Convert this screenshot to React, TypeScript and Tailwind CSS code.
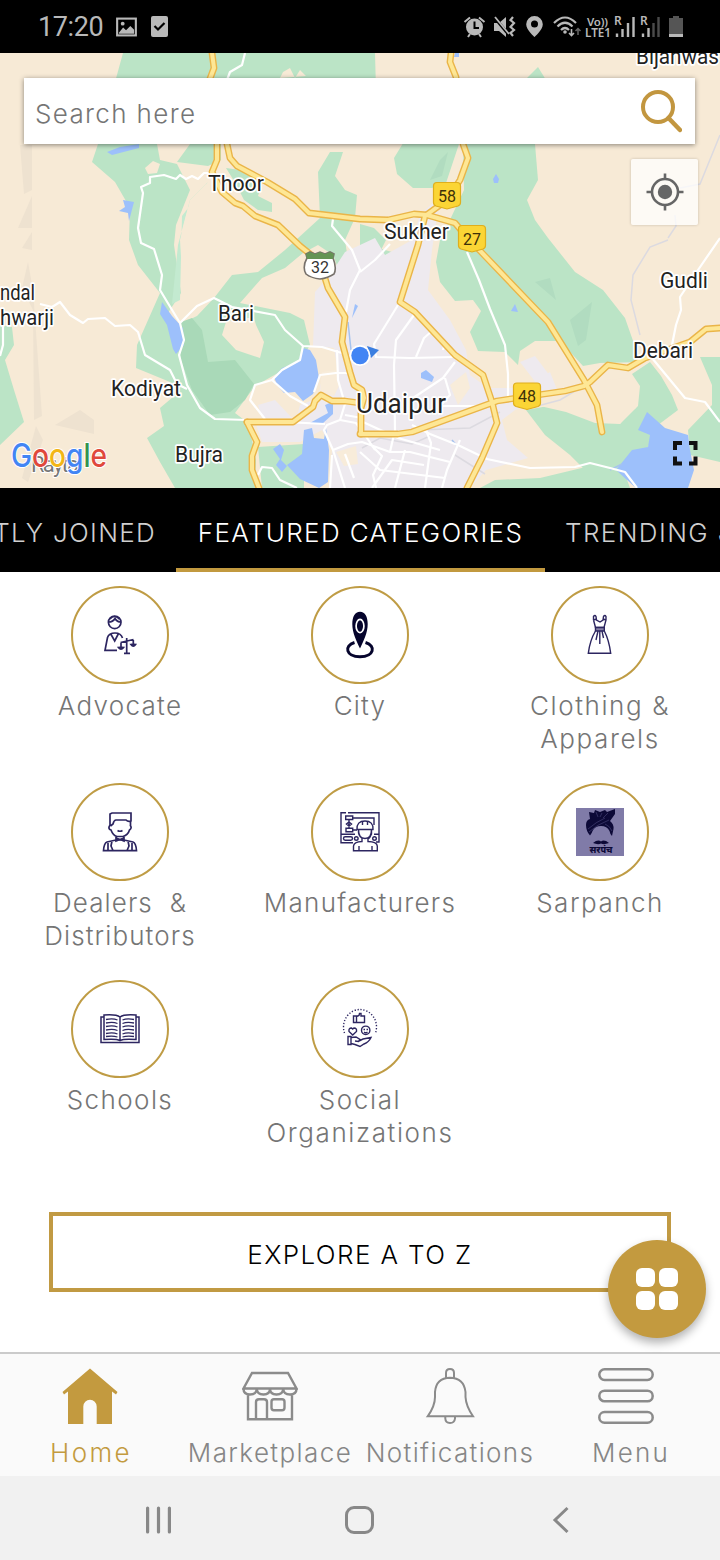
import * as React from "react";

const GOLD = "#c39a3f";
const INK = "#2c2560";

// Main roads, drawn twice: a darker casing and a light core on top
const HIGHWAYS = [
  "M212 53L214 68L208 84L217 144V160L212 172L222 192L235 203L243 206L255 216L278 225L300 246L320 262L328 288L345 317L342 342L350 372L354 385L362 390L364 398L361 408V434",
  "M227 144L230 158L237 166L267 182L295 199L309 213L360 219L388 220L414 214L427 215L455 223L466 236L485 256L548 322L584 380L597 405L602 432",
  "M451 53L450 62L456 77L463 144L468 158L460 180L447 200L425 216L418 245L400 302L415 312L455 355L483 375L492 402L497 423L482 458L467 488",
  "M360 434H398L412 432L497 401L510 399L565 391L584 386L590 382L608 365L628 368L645 358L690 342L706 329L720 328",
  "M247 422H293L313 407L315 401L321 395L332 401H345L360 403",
  "M247 422L257 442L252 456V470L259 488",
];

const STREETS = [
  "M245 53L242 65L230 72L227 80",
  "M212 173L204 173L198 179L192 176L186 179L180 175L176 179L164 175L150 177V183L141 187L143 193L138 228L141 243L154 249L162 275L160 290L166 300L180 323L184 340L179 355L187 385L200 408L215 419L247 420L325 424",
  "M180 323L197 306L214 298L232 307L275 315L285 330L303 346L322 347L345 354",
  "M303 346L300 360L282 370L272 380L255 385L250 400L265 419",
  "M272 380L290 396L308 406",
  "M40 304L52 307L60 302L70 315L83 323L88 319L105 318L115 326L130 325L138 332L145 355L170 370L177 384L187 389",
  "M0 356L3 345V325",
  "M467 252L479 280L490 309L505 345L508 374V400",
  "M720 238L698 270L680 297L681 310L676 325L672 345",
  "M652 358L685 398L705 402L720 422",
  "M412 425L430 434L460 446L487 459L530 468L575 467L590 463L610 468L625 472L637 488",
  "M333 219L332 226L352 250L360 270L350 290L346 312",
  "M360 272L375 260L390 244M398 305L374 344L376 357L410 358L455 357",
  "M414 315L396 340L394 365L395 430L390 452M416 357L424 338L432 331M455 362L443 378L428 388L410 400M445 378L450 395L440 406L482 406M443 350L445 343",
  "M337 350L338 380L345 404L340 420L327 425L324 430L333 450L345 488M345 415L362 418M314 392L320 375L336 373L352 373",
  "M333 450L348 444L362 442L390 452L410 452L450 462M372 446L382 456L373 475L376 488M405 450L395 488M426 430L431 443L425 488M460 440L447 470L442 488M360 452L380 470L445 478M340 420L356 423L365 435L375 450",
  "M258 475L262 467L272 468L280 480L297 488M330 488L332 455",
  "M363 422L398 438L440 450M345 454L354 478M372 488L392 460L424 465",
];

const GREENS = [
  "M123 53H375L376 90L300 144H221V160L208 166L177 162L190 144H157L160 160L177 164L190 190L176 225L174 245L181 293L166 316L178 325L197 316L214 298L232 275L258 272L285 250L320 218L318 172L330 152H343L335 176L345 190L357 195L355 218L345 240L350 274L341 276L333 255L318 245L303 253L285 268L262 278L240 303L290 313L304 320L310 345L300 362L278 373L255 386L235 413L247 422L252 440L256 460L255 488H175L160 462L147 438L164 426L160 408L173 397L170 382L136 368L137 345L160 293L138 265L129 240L130 208L115 182L92 162L98 144Z",
  "M405 140L394 158L397 174L413 188H432L446 183L459 144H535L538 180L527 200L535 220L548 238L575 272L603 290L625 318L638 355L645 362L600 363L583 366L560 341H535L520 351L518 365L505 352L478 351L470 332L481 311L473 300L455 301L440 282L436 262L440 240L448 224L464 190L463 140Z",
  "M525 80L538 67L546 80Z",
  "M526 410L548 406L584 414L620 424L638 406L640 386L632 374L650 362L661 376L672 395L678 410L658 425L648 447L622 470H585L570 455L545 435Z",
  "M480 488L495 480L540 478L590 466L622 466L630 488Z",
  "M700 357H720V462L690 455L688 430L712 405V385Z",
  "M0 325L12 327L14 345L5 360L14 390L24 422L0 445Z",
  "M258 447L304 444V488H262Z",
  "M362 240L378 248L392 252L382 258L372 252Z",
  "M360 224L374 228L386 240L378 256L360 246Z",
  "M226 168L240 170L262 184L258 196L272 203V212L258 210L244 200L236 184Z",
];

const PEACH = [
  "M222 335L226 322L240 318H254L256 325L264 342L260 358L236 350Z",
  "M206 184L190 200L180 240L183 288L215 250L225 200Z",
  "M145 168L153 161L160 164L157 173L148 174Z",
  "M252 392L270 382L288 396L306 404L298 418L268 418L250 408Z",
  "M535 388L580 380L635 380L638 400L620 424L595 423L566 412L540 406Z",
  "M600 418L614 423L636 408L638 388L628 378L606 380Z",
  "M280 78L283 72L290 68L295 78L300 70L306 76Z",
];

const WATERS = [
  "M162 302L172 316L183 328L184 345L176 354L173 349L167 325L160 314Z",
  "M303 348L310 350L316 360L319 378L313 394L303 401L295 392L284 393L277 385L274 377L282 368L298 362Z",
  "M304 430L312 428L314 438L324 439L326 428L329 450L328 482L319 488L300 479L287 465L302 454Z",
  "M273 449L280 444L284 450L281 460L287 466L282 472L276 465L280 459Z",
  "M107 152L120 147L139 144V148L112 155Z",
  "M123 200L134 202L129 221L128 213L119 211L125 207Z",
  "M647 412L665 428L688 435L690 450L694 470L688 488H636L616 470L632 450L648 447L650 435L638 430Z",
  "M325 405L332 402H333V414L322 424L308 424L328 413Z",
  "M421 373L426 370L434 377L432 382L421 378Z",
  "M496 174L499 179L498 183H494L493 179Z",
  "M511 311L515 304L518 312Z",
  "M455 53H459V57H454Z",
  "M355 304L352 318L358 306Z",
];

type Place = { name: string; x: number; y: number; w: number; size?: number };

const PLACES: Place[] = [
  { name: "Bijanwas", x: 636, y: 64, w: 83 },
  { name: "Thoor", x: 208, y: 191, w: 56 },
  { name: "Sukher", x: 384, y: 239, w: 65 },
  { name: "ndal", x: 0, y: 300, w: 35 },
  { name: "hwarji", x: 0, y: 325, w: 54 },
  { name: "Bari", x: 218, y: 321, w: 36 },
  { name: "Kodiyat", x: 111, y: 396, w: 70 },
  { name: "Bujra", x: 175, y: 462, w: 48 },
  { name: "Gudli", x: 660, y: 288, w: 48 },
  { name: "Debari", x: 633, y: 358, w: 60 },
  { name: "Udaipur", x: 356, y: 413, w: 90, size: 27 },
];

function Shield({ x, y, label }: { x: number; y: number; label: string }) {
  return (
    <g transform={`translate(${x} ${y})`}>
      <path d="M-10 -13H10Q13.500 -13 13.500 -9.500V7Q13.500 9.500 11 10.500L0 13.500L-11 10.500Q-13.500 9.500 -13.500 7V-9.500Q-13.500 -13 -10 -13Z" fill="#fbd535" stroke="#dfae1c" strokeWidth="1.200" />
      <text y="6" textAnchor="middle" fontSize="16" fill="#3d3109">{label}</text>
    </g>
  );
}

function CityMap() {
  return (
    <svg viewBox="0 53 720 435" className="block h-[435px] w-[720px] font-normal" fontFamily="Roboto, sans-serif">
      <rect y="53" width="720" height="435" fill="#f7ead6" />
      {GREENS.map((d) => <path key={d} d={d} fill="#bbe4c6" />)}
      <path d="M181 322L192 318L202 330L208 362L235 360L254 384L245 400L230 412L210 415L192 390L181 360Z" fill="#a9d9b8" />
      <path d="M570 320L592 302L586 340L578 346ZM535 282L550 278L556 300ZM430 180L440 160L448 152L442 176Z" fill="#b1dcc0" />
      <path d="M178 245L190 200L208 182L182 216L180 300L172 304Z" fill="#c3ead0" />
      {PEACH.map((d) => <path key={d} d={d} fill="#f7ead6" />)}
      <path d="M20 145H32V190L24 194ZM18 228L32 196V228ZM22 248L32 232V250ZM28 262L33 290L42 416L34 420L33 310L22 288ZM55 425L80 410L94 420V434ZM36 426L43 440L28 482L22 478Z" fill="#eee2d0" />
      <path d="M345 252L375 238L385 255L412 240L420 215L440 196L432 250L428 290L450 320L466 350L470 375L488 388H525L550 372L558 392L515 410L502 420L507 440L528 458L486 470L470 488H330L332 450L322 430L300 442H262L256 424L296 420L300 405L318 398L322 378L338 372L334 348L313 346L315 292L330 275Z" fill="#eeeaef" />
      <path d="M258 405L275 400L292 418H262ZM520 362L535 356L553 380L540 388Z" fill="#eeeaef" />
      <path d="M322 372L336 370L340 384L334 396L320 392ZM450 385L466 372L470 388L458 405ZM336 452L356 446L358 464L344 466Z" fill="#f8ecda" />
      {WATERS.map((d) => <path key={d} d={d} fill="#9dc0fb" />)}
      <path d="M348 322L351 350M452 440L458 447M610 470L622 464" fill="none" stroke="#a6c3ee" strokeWidth="1.500" />
      <path d="M720 135L700 184L680 188M675 215L676 226L668 238M668 240L650 247L633 275L631 300L640 335M530 408L560 400L580 388M420 430L470 428L500 412M455 455L485 474M362 448L380 438L412 444L430 436" fill="none" stroke="#dcdae0" strokeWidth="1.500" />
      {STREETS.map((d) => <path key={d} d={d} fill="none" stroke="#fff" strokeWidth="2.200" strokeLinejoin="round" />)}
      {HIGHWAYS.map((d) => <path key={d} d={d} fill="none" stroke="#eab548" strokeWidth="6.800" strokeLinejoin="round" strokeLinecap="round" />)}
      {HIGHWAYS.map((d) => <path key={d} d={d} fill="none" stroke="#fee795" strokeWidth="4" strokeLinejoin="round" strokeLinecap="round" />)}

      <Shield x={447} y={195.500} label="58" />
      <Shield x={472} y={238.500} label="27" />
      <Shield x={527} y={396} label="48" />
      <path d="M306 254L310 252L315 254L320 252L325 254L330 252L334 254L333 258Q337 268 334 274Q328 278 320 279Q311 278 306 274Q302 267 307 258Z" fill="#fff" stroke="#77716b" strokeWidth="1.600" />
      <path d="M306 254L310 252L315 254L320 252L325 254L330 252L334 254L333 259H307Z" fill="#649454" />
      <text x="320" y="272.500" textAnchor="middle" fontSize="16" fill="#333">32</text>

      {/* Current position with its heading */}
      <path d="M367 346L379 350L371 358Z" fill="#3c7fe0" />
      <circle cx="360" cy="355.500" r="10.500" fill="#fff" />
      <circle cx="360" cy="355.500" r="8.700" fill="#4285f4" />

      {PLACES.map((p) => (
        <text
          key={p.name}
          x={p.x}
          y={p.y}
          fontSize={p.size ?? 22}
          textLength={p.w}
          lengthAdjust="spacingAndGlyphs"
          fill="#222"
          stroke="#fff"
          strokeWidth="3.500"
          strokeLinejoin="round"
          paintOrder="stroke"
        >
          {p.name}
        </text>
      ))}
      <text x="31" y="472" fontSize="22" textLength="48" fill="#777" stroke="#fff" strokeWidth="2" paintOrder="stroke">Rayta</text>
      <text x="11" y="467" fontSize="32" fontWeight="500" textLength="96" lengthAdjust="spacingAndGlyphs" fontFamily="Inter, sans-serif" stroke="#fff" strokeWidth="2" paintOrder="stroke">
        <tspan fill="#4285f4">G</tspan>
        <tspan fill="#e0483c">o</tspan>
        <tspan fill="#f3b617">o</tspan>
        <tspan fill="#4285f4">g</tspan>
        <tspan fill="#34944d">l</tspan>
        <tspan fill="#e0483c">e</tspan>
      </text>
      <path d="M682 443H675V450M689 443H695.500V450M682 463.500H675V456.500M689 463.500H695.500V456.500" fill="none" stroke="#111" strokeWidth="4" />
    </svg>
  );
}

function StatusBar() {
  return (
    <div className="flex h-[53px] items-center bg-black pr-[36px] pl-[38px] font-normal text-[#b9b9b9]">
      <span className="w-[64px] pt-[2px] font-['Roboto'] text-[27px] leading-none tracking-[-0.4px]">17:20</span>
      <svg viewBox="0 0 22 20" className="ml-[14px] h-[20px] w-[21px]">
        <rect x="1.200" y="1.200" width="19.600" height="17.600" fill="none" stroke="currentColor" strokeWidth="2.200" />
        <path d="M3 16L7.500 10.500L10.500 13.500L15 9L19 13V17H3Z" fill="currentColor" />
        <circle cx="7" cy="6.500" r="2" fill="currentColor" />
      </svg>
      <svg viewBox="0 0 17 21" className="ml-[14px] h-[21px] w-[17px]">
        <rect width="17" height="21" rx="2" fill="currentColor" />
        <path d="M3.500 10L7 13.500L13.500 7" fill="none" stroke="#000" strokeWidth="2.200" />
      </svg>
      <svg viewBox="464 15 220 24" className="ml-auto h-[24px] w-[220px] overflow-visible" fontFamily="Noto Sans, sans-serif">
        {/* alarm */}
        <circle cx="474.500" cy="27" r="8.500" fill="currentColor" />
        <path d="M464.500 22L470 17.500M484.500 22L479 17.500M468 37L470 34M481 37L479 34" stroke="currentColor" strokeWidth="2" />
        <path d="M474.500 21.500V28H479" fill="none" stroke="#000" strokeWidth="2" />
        {/* muted, vibrating */}
        <path d="M494 23H499L506 17V37L499 31H494Z" fill="currentColor" />
        <path d="M494 17L509 35" stroke="#000" strokeWidth="3" />
        <path d="M495 17L509 34" stroke="currentColor" strokeWidth="1.800" />
        <path d="M513 17L510.500 20L514 23L510.500 27L514 30L510.500 33L513 36" fill="none" stroke="currentColor" strokeWidth="2.200" />
        {/* location */}
        <path d="M534.500 16A8.300 8.300 0 0 0 526.200 24.300C526.200 30 534.500 37 534.500 37S542.800 30 542.800 24.300A8.300 8.300 0 0 0 534.500 16Z" fill="currentColor" />
        <circle cx="534.500" cy="24" r="3.500" fill="#000" />
        {/* wifi */}
        <path d="M554 23Q565 12 576 23M557.500 26.500Q565 19 572.500 26.500M561 30Q565 26 569 30" fill="none" stroke="currentColor" strokeWidth="2.200" />
        <circle cx="565" cy="32" r="1.800" fill="currentColor" />
        <path d="M571.500 29V35M569 33L571.500 35.500L574 33" fill="none" stroke="currentColor" strokeWidth="1.600" />
        <path d="M578 35V29M575.500 31L578 28.500L580.500 31" fill="none" stroke="#666" strokeWidth="1.500" />
        <text x="587" y="25.500" fontSize="11.500" fontWeight="600" textLength="21" fill="currentColor">Vo))</text>
        <text x="585" y="37" fontSize="12" fontWeight="600" textLength="26" lengthAdjust="spacingAndGlyphs" fill="currentColor">LTE1</text>
        <text x="614" y="24.500" fontSize="12" fontWeight="600" fill="currentColor">R</text>
        <path d="M617 33.500V37M622.500 29V37M628 23V37M633.500 17V37" stroke="currentColor" strokeWidth="2.400" />
        <text x="640" y="24.500" fontSize="12" fontWeight="600" fill="currentColor">R</text>
        <path d="M643 33.500V37M648.500 28V37" stroke="currentColor" strokeWidth="2.400" />
        <path d="M653.500 23V37M658.500 17V37" stroke="#4a4a4a" strokeWidth="2.400" />
        <path d="M669 18H673V16H679V18H683V34H669Z" fill="#555" />
        <path d="M669 34H683V37H669Z" fill="currentColor" />
      </svg>
    </div>
  );
}

function CategoryIcon({ kind }: { kind: string }) {
  const common = { viewBox: "0 0 48 48", className: "h-12 w-12", fill: "none", stroke: INK, strokeWidth: 1.7 };
  switch (kind) {
    case "advocate":
      return (
        <svg {...common}>
          <circle cx="18.700" cy="11.300" r="6.300" />
          <path d="M12.500 11Q17 11 19 7.500Q21 11 25 11M14 8Q18 3 23.500 8" />
          <path d="M21 39.300H9L11.500 26.500Q13 22 19 22Q25 22 26.500 27M14.500 22.500L18.700 30L22.500 22.500" />
          <path d="M30.700 27V42M28 42.300H34M24.500 31.500L37.500 28.500M25 32V36M37.300 29V33M22.500 36.500H27.500M35 33.500H39.500" />
          <path d="M22.500 36.500Q25 40 27.500 36.500ZM35 33.500Q37.300 37 39.500 33.500Z" fill={INK} />
        </svg>
      );
    case "city":
      return (
        <svg viewBox="0 0 48 48" className="h-12 w-12">
          <path d="M18.500 31.500C7.500 35 10 45.700 24 45.700C38 45.700 40.500 35 29.500 31.500" fill="none" stroke="#05042c" strokeWidth="3" />
          <path d="M24 0.700C18.800 0.700 16.300 6 16.300 13C16.300 22 20.500 30 24 37.500C27.500 30 31.700 22 31.700 13C31.700 6 29.200 0.700 24 0.700Z" fill="#05042c" />
          <ellipse cx="24" cy="15" rx="3.900" ry="6.600" fill="#05042c" stroke="#fff" strokeWidth="1.700" />
        </svg>
      );
    case "clothing":
      return (
        <svg {...common} strokeWidth={1.400}>
          <path d="M17.500 9V5.500Q19 3.500 20 5.500L20.500 9L24 11L27 9L27.500 5.500Q29 3.500 30 5.500V9L28 16.500H19.500L17.500 9M17.500 9L20.500 8M30 9L27 8" />
          <path d="M19.500 16.500H28.300V20H19.500Z" fill="#8681a5" />
          <path d="M19.500 20Q14 29 12.300 42.300H34.700Q33 29 28.300 20M23.800 20V33M22 20L20 29M26 20L27.500 27" />
        </svg>
      );
    case "dealer":
      return (
        <svg {...common}>
          <path d="M14 17V6L16 5H35V13Q32 14 30 12H20Q18 12 17 16L14.500 18M34.500 13V18M14 17Q11.500 21 15 22Q17 27.500 21 28.500H27Q32 27 33.500 22Q36.500 20 34 17M21.500 22.500Q24 24 26.500 22.500" />
          <path d="M20.500 28.500V31L24 32L27.500 31V28.500M20 30L28 33V30L20 33ZM20 32L11 34Q8 35 7.500 42.700H40.500Q40 35 37 34L28 32M12 42V35M36 42V35M16 33L15 38L17 42.500M32 33L33 38L31 42.500" />
        </svg>
      );
    case "manufacturer":
      return (
        <svg {...common} strokeWidth={1.400}>
          <path d="M10 4.700H5V34.700H17M12 4.700H43V34H40M5 26.300H19M38 26.300H43M17 10H38V17M13 12V20M9.700 8H16.700V11.500H9.700ZM10 20.300H16.700V23.700H10ZM13 14L15.500 16L13 18L10.500 16ZM17 22H21" />
          <rect x="7.500" y="28.700" width="9" height="3.500" rx="1.700" />
          <circle cx="20.300" cy="30.500" r="1.800" />
          <circle cx="38.500" cy="30.500" r="1.800" />
          <path d="M21 21.500Q20.500 13 29 13Q37.500 13 37 21.500ZM22.500 21.500Q22.500 30.500 29 30.500Q35.500 30.500 35.500 21.500L35.500 26Q34 30 32 31V33.500H32Q41 33.700 41.300 38V42.700H17.500V38Q18 33.700 26 33.500V30Q22 28 22.500 21.500Z" fill="#fff" />
          <path d="M26.500 13V17M31.500 13V17M23 38V42.500M36 38V42.500" />
        </svg>
      );
    case "sarpanch":
      return (
        <svg viewBox="0 0 48 48" className="h-12 w-12 bg-[#807ba8]">
          <path d="M14 11L13 4L18 5L19 2L24 4L29 2L31 4L39 1V6L34 13Q38 16 37.500 21L36 28Q34 26 33.500 23Q31 18 25 18Q19 18 16.500 23Q16 25 14 27.500Q10 23 10 17Q10 12 14 11Z" fill="#0c0937" />
          <path d="M12 21Q20 14 29 10M13 24Q20 17 33 12M29 16Q34 18 36 23M20 4L22 9M26 5L24 9M32 5L27 10" stroke="#59548b" strokeWidth=".5" fill="none" />
          <path d="M17 35Q22 31 25 33.500Q28 31 33 35Q28 37 25 35.500Q22 37 17 35Z" fill="#0c0937" />
          <text x="25" y="45" textAnchor="middle" fontSize="9" fontWeight="800" textLength="23" fill="#0c0937" fontFamily="Noto Sans, sans-serif">सरपंच</text>
        </svg>
      );
    case "school":
      return (
        <svg {...common} strokeWidth={1.500}>
          <path d="M7.500 12H5V37.500H43V12H40.500M24 12Q20 9 8 10V34.500Q20 33.500 24 35.500Q28 33.500 40 34.500V10Q28 9 24 12V36" />
          <path d="M10 14.500Q17 13 21.500 15M10 18Q17 16.500 21.500 18.500M10 21.500Q17 20 21.500 22M10 25Q17 23.500 21.500 25.500M10 28.500Q17 27 21.500 29M10 31.500Q17 30.500 21.500 32M26.500 15Q31 13 38 14.500M26.500 18.500Q31 16.500 38 18M26.500 22Q31 20 38 21.500M26.500 25.500Q31 23.500 38 25M26.500 29Q31 27 38 28.500M26.500 32Q31 30.500 38 31.500" strokeWidth="1.300" />
        </svg>
      );
    default:
      return (
        <svg {...common} strokeWidth={1.400}>
          <path d="M8.500 28A16.500 17.500 0 1 1 39.500 28" strokeDasharray="1.300 1.700" />
          <path d="M17.500 11H20.500V17.500H17.500ZM20.500 11.500L23 10.500L23.500 8.500H25V11H28.500V17.500H20.500" />
          <path d="M16.700 30L13 26.500Q12.500 23 15.500 23L16.700 24L18 23Q21 23 20.500 26.500Z" />
          <circle cx="29.700" cy="25.300" r="4.200" />
          <path d="M27.500 24.500H29M30.500 24.500H32M28 27Q29.700 28.500 31.500 27M12 31.500H15V39.500H12ZM15 32.500L20 32L24 34.500L22.500 36.500L19 36M23 36L27 34L35 32.500Q33 37 28 39L24 41.500L19 39.500L15 38.500" />
        </svg>
      );
  }
}

const CATEGORIES = [
  { kind: "advocate", lines: ["Advocate"], spacing: "tracking-[1.3px]" },
  { kind: "city", lines: ["City"], spacing: "tracking-[1.2px]" },
  { kind: "clothing", lines: ["Clothing &", "Apparels"], spacing: "tracking-[1.6px]" },
  { kind: "dealer", lines: ["Dealers  &", "Distributors"], spacing: "tracking-[1.1px]" },
  { kind: "manufacturer", lines: ["Manufacturers"], spacing: "tracking-[1.3px]" },
  { kind: "sarpanch", lines: ["Sarpanch"], spacing: "tracking-[1.5px]" },
  { kind: "school", lines: ["Schools"], spacing: "tracking-[1.4px]" },
  { kind: "social", lines: ["Social", "Organizations"], spacing: "tracking-[1.6px]" },
];

function HomeIcon() {
  return (
    <svg viewBox="0 0 56 56" className="h-14 w-14" fill={GOLD}>
      <path d="M28 0.500L55.500 24L54 26.500L50 23.500V56H34.700V38.500A6.700 6.700 0 0 0 21.300 38.500V56H6V23.500L2 26.500L0.500 24Z" />
    </svg>
  );
}

function ShopIcon() {
  return (
    <svg viewBox="0 0 56 56" className="h-14 w-14" fill="none" stroke="#8b8b8b" strokeWidth="2.400">
      <path d="M10 5H46L54.500 20.500H1.500Z" />
      <path d="M1.500 20.500Q1.500 26.500 8 26.500Q14.500 26.500 14.800 20.500Q15 26.500 21.500 26.500Q28 26.500 28 20.500Q28 26.500 34.500 26.500Q41 26.500 41.200 20.500Q41.500 26.500 48 26.500Q54.500 26.500 54.500 20.500M6 26V51.300H50V26" />
      <path d="M14 51V34Q14 31.300 17 31.300H22Q25 31.300 25 34V51" />
      <rect x="29.500" y="31.300" width="13" height="11" rx="2.500" />
    </svg>
  );
}

function BellIcon() {
  return (
    <svg viewBox="0 0 56 56" className="h-14 w-14" fill="none" stroke="#8b8b8b" strokeWidth="2">
      <path d="M24 10V5Q24 1 28 1Q32 1 32 5V10" />
      <path d="M5.700 48.300Q13 38 13 29V24Q14 10 28 9.700Q42 10 43.500 24V29Q44 38 51 48.300Z" />
      <path d="M23.300 48.300V50.500Q23.500 55 28 55Q32.500 55 33 50.500V48.300" />
    </svg>
  );
}

function MenuIcon() {
  return (
    <svg viewBox="0 0 56 56" className="mr-2 h-14 w-14" fill="none" stroke="#8b8b8b" strokeWidth="2.500">
      <rect x="1.300" y="1.300" width="53.400" height="10.600" rx="5.300" />
      <rect x="1.300" y="22.700" width="53.400" height="10.600" rx="5.300" />
      <rect x="1.300" y="44.100" width="53.400" height="10.600" rx="5.300" />
    </svg>
  );
}

function NavItem({ icon, label, className }: { icon: React.ReactNode; label: string; className: string }) {
  return (
    <div className="flex w-[180px] flex-col items-center pt-[14px]">
      {icon}
      <span className={`mt-[12px] text-[26px] leading-[33px] whitespace-nowrap ${className}`}>{label}</span>
    </div>
  );
}

export default function App() {
  return (
    <div className="relative flex h-[1560px] w-[720px] flex-col overflow-hidden bg-white font-['Inter',sans-serif] font-light">
      <StatusBar />

      <div className="relative h-[435px]">
        <CityMap />
        <div className="absolute top-[25px] left-[24px] flex h-[66px] w-[671px] items-center justify-between bg-white pr-[13px] pl-[11px] shadow-[0_1px_5px_rgba(0,0,0,0.45)]">
          <span className="pt-[4px] text-[26px] tracking-[1.35px] text-[#757575]">Search here</span>
          <svg viewBox="0 0 42 44" className="h-[44px] w-[42px]" fill="none" stroke="#c2963f">
            <circle cx="18" cy="18" r="15" strokeWidth="4" />
            <path d="M28.500 29L40 41" strokeWidth="4.500" strokeLinecap="round" />
          </svg>
        </div>
        <div className="absolute top-[106px] left-[631px] flex h-[66px] w-[67px] items-center justify-center rounded-[2px] bg-white/75 shadow-[0_0_3px_rgba(0,0,0,0.2)]">
          <svg viewBox="0 0 38 38" className="h-[38px] w-[38px]" fill="none" stroke="#666" strokeWidth="2.600">
            <circle cx="19" cy="19" r="13" />
            <circle cx="19" cy="19" r="7.200" fill="#666" stroke="none" />
            <path d="M19 0.500V7M19 31V37.500M0.500 19H7M31 19H37.500" />
          </svg>
        </div>
      </div>

      <div className="flex h-[84px] bg-black text-[26px] leading-[90px] whitespace-nowrap text-[#cfcfcf]">
        <div className="flex w-[176px] shrink-0 justify-end overflow-hidden pr-[20px]">
          <span className="tracking-[1.3px]">RECENTLY JOINED</span>
        </div>
        <div className="flex w-[369px] shrink-0 justify-center overflow-hidden border-b-4 border-[#c2993f] text-white">
          <span className="tracking-[1.35px]">FEATURED CATEGORIES</span>
        </div>
        <div className="w-[175px] overflow-hidden pl-[20px]">
          <span className="tracking-[1.4px]">TRENDING JOBS</span>
        </div>
      </div>

      <div className="grid grid-cols-3">
        {CATEGORIES.map((c) => (
          <div key={c.kind} className="flex h-[197px] flex-col items-center pt-[14px]">
            <div className="flex h-[98px] w-[98px] shrink-0 items-center justify-center rounded-full border-2 border-[#bf9c45]">
              <CategoryIcon kind={c.kind} />
            </div>
            <div className={`mt-[5px] text-center text-[26px] leading-[33px] whitespace-pre text-[#757575] ${c.spacing}`}>
              {c.lines.map((line) => <div key={line}>{line}</div>)}
            </div>
          </div>
        ))}
      </div>

      <div className="mx-[49px] mt-[49px] flex h-[80px] items-center justify-center border-4 border-[#c19a43] pt-[5px] text-[26px] text-black">
        <span className="tracking-[1.4px]">EXPLORE A TO Z</span>
      </div>

      <div className="mt-auto flex h-[124px] border-t-2 border-[#cbcbcb] bg-[#fafafa] text-[#868686]">
        <NavItem icon={<HomeIcon />} label="Home" className="pl-[2px] tracking-[2.4px] text-[#c39a3f]" />
        <NavItem icon={<ShopIcon />} label="Marketplace" className="tracking-[1.4px]" />
        <NavItem icon={<BellIcon />} label="Notifications" className="tracking-[1.35px]" />
        <NavItem icon={<MenuIcon />} label="Menu" className="pl-[2px] tracking-[2.2px]" />
      </div>

      <div className="flex h-[84px] items-center bg-[#f1f1f1] pt-[4px] pl-[145px]">
        <svg viewBox="0 0 27 28" className="h-[28px] w-[27px]" stroke="#888" strokeWidth="3.200" strokeLinecap="round">
          <path d="M2.600 2V26M13.500 2V26M24.400 2V26" />
        </svg>
        <div className="ml-[173px] h-[28px] w-[29px] rounded-[9px] border-[3px] border-[#888]" />
        <svg viewBox="0 0 18 28" className="ml-[178px] h-[28px] w-[18px]" fill="none" stroke="#888" strokeWidth="3">
          <path d="M15.500 2L3 14L15.500 26" />
        </svg>
      </div>

      {/* Floating quick-access button */}
      <div className="absolute top-[1240px] left-[608px] flex h-[98px] w-[98px] items-center justify-center rounded-full bg-[#c39a3f] shadow-[0_5px_10px_rgba(0,0,0,0.3)]">
        <div className="grid grid-cols-2 gap-[4px]">
          {[0, 1, 2, 3].map((i) => <div key={i} className="h-[19px] w-[19px] rounded-[6px] bg-white" />)}
        </div>
      </div>
    </div>
  );
}
